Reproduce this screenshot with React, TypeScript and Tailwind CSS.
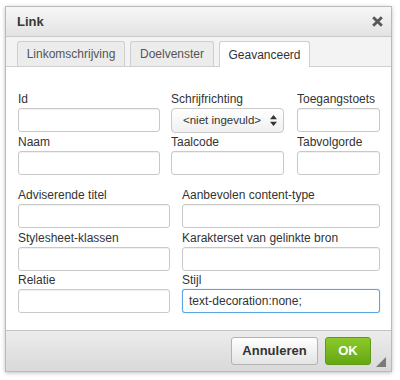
import React from "react";

const font = { fontFamily: '"Liberation Sans", Arial, sans-serif' };

function Label({ children }: { children: React.ReactNode }) {
  return <div className="text-[12px] leading-[14px] text-[#333] mb-[2px] whitespace-nowrap">{children}</div>;
}

function Input({ w, value, focus }: { w: string; value?: string; focus?: boolean }) {
  return (
    <div
      className={`${w} h-[24px] rounded-[3px] bg-white border flex items-center px-[6px] text-[12px] text-[#333] ${
        focus ? "border-[#59a5e5] shadow-[0_0_1px_#59a5e5]" : "border-[#c9c9c9] shadow-[inset_0_1px_1px_rgba(0,0,0,0.06)]"
      }`}
    >
      {value}
    </div>
  );
}

export default function App() {
  return (
    <div className="w-[400px] h-[380px] bg-white relative" style={font}>
      <div className="absolute left-[5px] top-[6px] w-[387px] h-[366px] border border-[#b9b9b9] bg-white shadow-[0_1px_4px_rgba(0,0,0,0.25)] flex flex-col overflow-hidden">
        {/* title */}
        <div className="h-[30px] bg-gradient-to-b from-[#f7f7f7] to-[#e3e3e3] border-b border-[#c8c8c8] flex items-center justify-between pl-[11px] pr-[7px] shrink-0">
          <span className="text-[13px] font-bold text-[#383838]">Link</span>
          <svg width="13" height="13" viewBox="0 0 12 12">
            <path d="M2 2 L10 10 M10 2 L2 10" stroke="#585858" strokeWidth="2.6" strokeLinecap="butt" />
          </svg>
        </div>
        {/* tabs */}
        <div className="h-[30px] bg-[#f3f3f3] flex items-end pl-[11px] gap-[5px] shrink-0 border-b border-[#cfcfcf]">
          <div className="w-[108px] h-[25px] border border-b-0 border-[#cfcfcf] rounded-t-[3px] bg-[#ececec] flex items-center justify-center text-[12px] text-[#555]">
            Linkomschrijving
          </div>
          <div className="w-[84px] h-[25px] border border-b-0 border-[#cfcfcf] rounded-t-[3px] bg-[#ececec] flex items-center justify-center text-[12px] text-[#555]">
            Doelvenster
          </div>
          <div className="w-[91px] h-[26px] border border-b-0 border-[#cfcfcf] rounded-t-[3px] bg-white flex items-center justify-center text-[12px] text-[#333] -mb-px">
            Geavanceerd
          </div>
        </div>
        {/* panel */}
        <div className="flex-1 bg-white pl-[12px] pr-[11px] pt-[25px]">
          <div className="flex">
            <div className="flex flex-col">
              <Label>Id</Label>
              <Input w="w-[142px]" />
              <div className="h-[3px]" />
              <Label>Naam</Label>
              <Input w="w-[142px]" />
            </div>
            <div className="flex flex-col ml-[11px]">
              <Label>Schrijfrichting</Label>
              <div className="w-[113px] h-[25px] rounded-[4px] border border-[#c9c9c9] bg-gradient-to-b from-white to-[#f0f0f0] flex items-center justify-between pl-[11px] pr-[6px] text-[11.5px] text-[#333]">
                <span className="whitespace-nowrap">&lt;niet ingevuld&gt;</span>
                <svg width="7" height="11" viewBox="0 0 7 11">
                  <path d="M3.5 0 L7 4.2 L0 4.2 Z M3.5 11 L7 6.8 L0 6.8 Z" fill="#333" />
                </svg>
              </div>
              <div className="h-[2px]" />
              <Label>Taalcode</Label>
              <Input w="w-[113px]" />
            </div>
            <div className="flex flex-col ml-[13px]">
              <Label>Toegangstoets</Label>
              <Input w="w-[83px]" />
              <div className="h-[3px]" />
              <Label>Tabvolgorde</Label>
              <Input w="w-[83px]" />
            </div>
          </div>
          <div className="flex mt-[13px]">
            <div className="flex flex-col">
              <Label>Adviserende titel</Label>
              <Input w="w-[152px]" />
              <div className="h-[3px]" />
              <Label>Stylesheet-klassen</Label>
              <Input w="w-[152px]" />
              <div className="h-[2px]" />
              <Label>Relatie</Label>
              <Input w="w-[152px]" />
            </div>
            <div className="flex flex-col ml-[12px]">
              <Label>Aanbevolen content-type</Label>
              <Input w="w-[198px]" />
              <div className="h-[3px]" />
              <Label>Karakterset van gelinkte bron</Label>
              <Input w="w-[198px]" />
              <div className="h-[2px]" />
              <Label>Stijl</Label>
              <Input w="w-[198px]" value="text-decoration:none;" focus />
            </div>
          </div>
        </div>
        {/* footer */}
        <div className="h-[41px] shrink-0 border-t border-[#c4c4c4] bg-gradient-to-b from-[#ececec] to-[#d9d9d9] flex items-center justify-end pr-[20px] gap-[7px] relative">
          <div className="w-[87px] h-[28px] rounded-[3px] border border-[#b3b3b3] bg-gradient-to-b from-white to-[#e4e4e4] flex items-center justify-center text-[13px] font-bold text-[#333]">
            Annuleren
          </div>
          <div className="w-[46px] h-[28px] rounded-[3px] border border-[#5d9a16] bg-gradient-to-b from-[#8cca2a] to-[#66a713] flex items-center justify-center text-[13px] font-bold text-white">
            OK
          </div>
          <svg className="absolute right-[5px] bottom-[4px]" width="10" height="10" viewBox="0 0 10 10">
            <path d="M10 0 L10 10 L0 10 Z" fill="#7a7a7a" />
          </svg>
        </div>
      </div>
    </div>
  );
}
